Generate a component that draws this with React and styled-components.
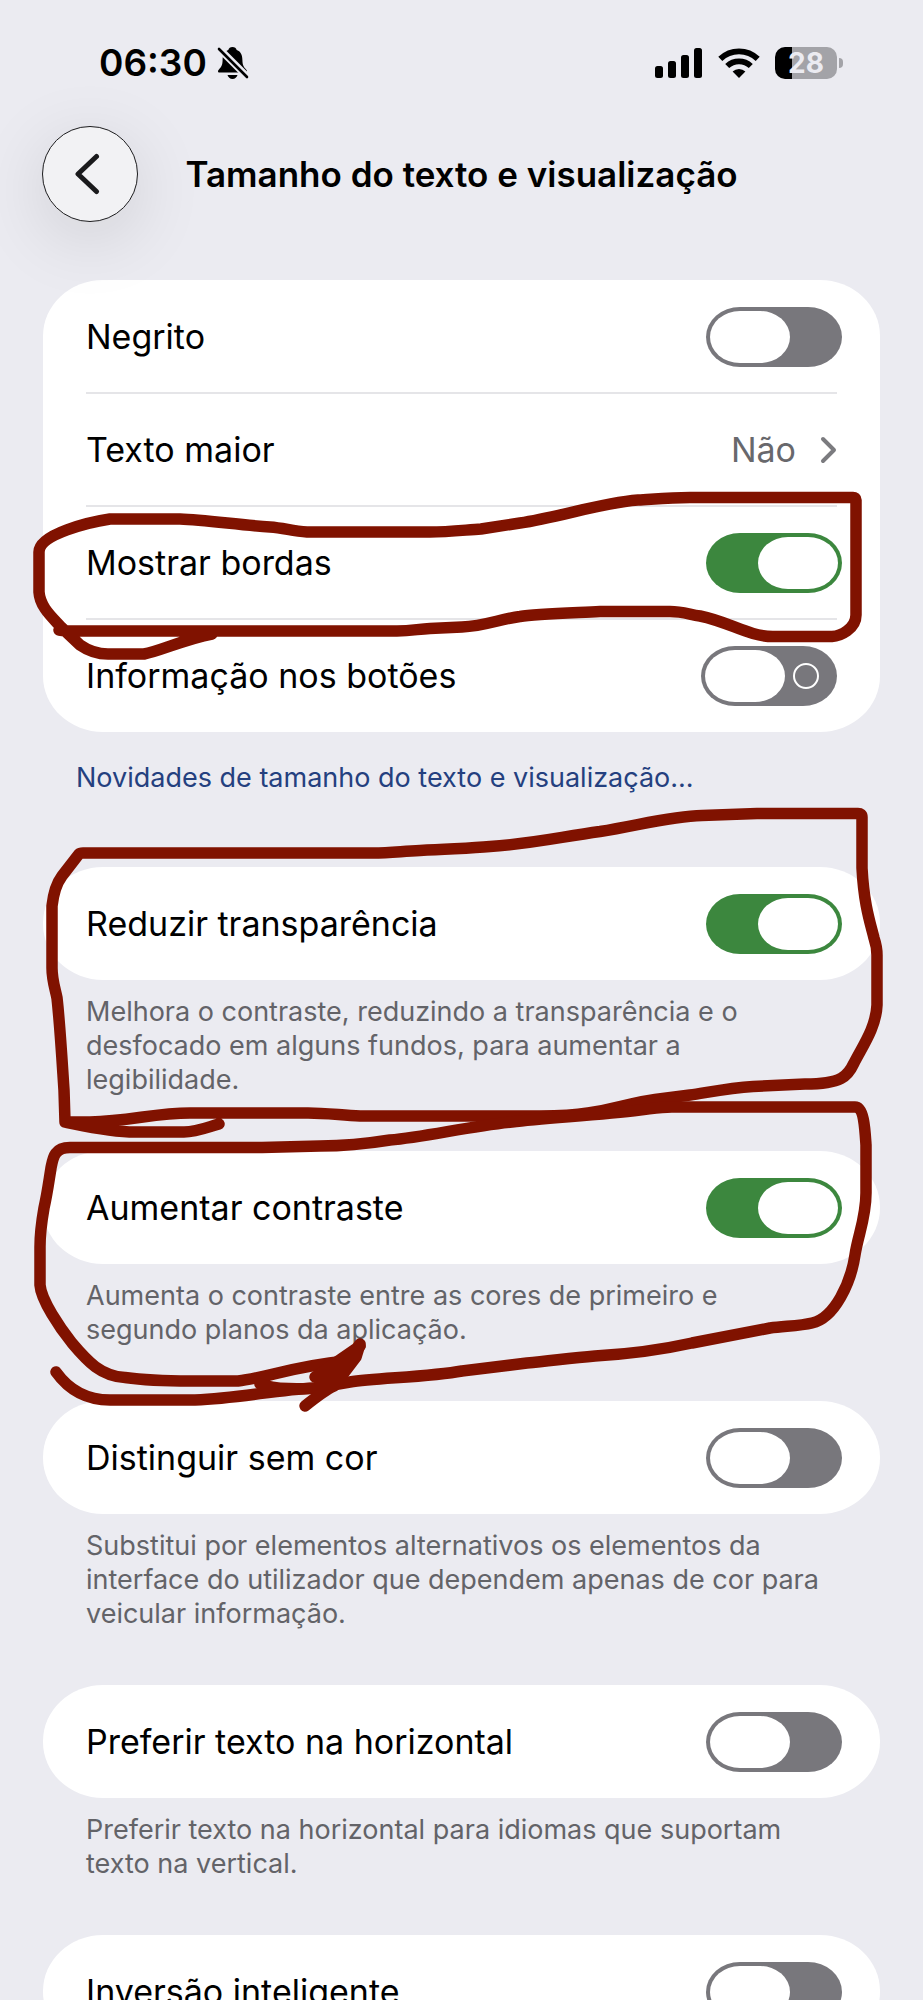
import { useState } from "react";
import styled, { createGlobalStyle } from "styled-components";

const GlobalStyle = createGlobalStyle`
  * {
    box-sizing: border-box;
  }

  body {
    margin: 0;
    background: #ebebf1;
    color: #000;
    font-family: Inter, "Liberation Sans", sans-serif;
  }
`;

const Screen = styled.div`
  position: relative;
  height: 100vh;
  overflow: hidden;
  background: #ebebf1;
`;

const StatusBar = styled.div`
  display: flex;
  align-items: center;
  justify-content: space-between;
  height: 126px;
  padding: 0 80px 0 99px;
`;

const StatusGroup = styled.div`
  display: flex;
  align-items: center;
  gap: ${({ $gap }) => $gap}px;

  svg {
    display: block;
  }
`;

const Time = styled.span`
  font-size: 37px;
  font-weight: 600;
  line-height: 44px;
`;

const Battery = styled.div`
  display: flex;
  align-items: center;
  gap: 2px;

  &::after {
    content: "";
    width: 4px;
    height: 10px;
    border-radius: 0 5px 5px 0;
    background: #a3a3a8;
  }
`;

const BatteryLevel = styled.span`
  width: 62px;
  border-radius: 10px;
  background: linear-gradient(to right, #000 ${({ $level }) => $level}%, #a3a3a8 0);
  color: #ebebf1;
  font-size: 28px;
  font-weight: 700;
  line-height: 32px;
  text-align: center;
`;

const Header = styled.header`
  display: grid;
  grid-template-columns: 96px 1fr 96px;
  align-items: center;
  padding: 0 42px;
  margin-bottom: 58px;
`;

const BackButton = styled.button`
  display: flex;
  align-items: center;
  justify-content: center;
  width: 96px;
  height: 96px;
  padding: 0 6px 0 0;
  border: 1px solid #1c1c1e;
  border-radius: 50%;
  background: #f2f2f4;
  box-shadow: 0 16px 72px rgba(0, 0, 0, 0.12);
`;

const Title = styled.h1`
  margin: 0;
  font-size: 35px;
  font-weight: 600;
  line-height: 44px;
  text-align: center;
  white-space: nowrap;
`;

const Main = styled.main`
  padding: 0 43px;
`;

const Card = styled.div`
  padding: 1px 0;
  border-radius: 60px / 56px;
  background: #fff;
`;

const Row = styled.div`
  display: flex;
  align-items: center;
  justify-content: space-between;
  min-height: 111px;
  padding: 0 ${({ $inset }) => ($inset ? 43 : 38)}px 0 43px;
  font-size: 34px;
  line-height: 44px;
`;

const Divider = styled.hr`
  height: 2px;
  margin: 0 43px;
  border: 0;
  background: #e5e5e8;
`;

const Switch = styled.input`
  appearance: none;
  display: flex;
  align-items: center;
  gap: 8px;
  width: 136px;
  height: 60px;
  margin: 0;
  padding: 4px;
  border-radius: 34px / 30px;
  background: #78777c;

  &::before {
    content: "";
    width: 80px;
    height: 52px;
    border-radius: 30px / 26px;
    background: #fff;
  }

  &:checked {
    justify-content: flex-end;
    background: #3c873e;
  }

  &[data-marked="true"]:not(:checked)::after {
    content: "";
    width: 22px;
    height: 22px;
    border: 2px solid #fff;
    border-radius: 50%;
  }
`;

const ValueButton = styled.button`
  display: flex;
  align-items: center;
  gap: 24px;
  padding: 0;
  border: 0;
  background: none;
  color: #68686c;
  font: inherit;
`;

const Note = styled.p`
  margin: 0;
  padding: 15px 48px 54px 43px;
  color: #636368;
  font-size: 27px;
  line-height: 34px;
`;

const NewsLink = styled.a`
  display: block;
  padding: 29px 33px 72px;
  color: #24407f;
  font-size: 27px;
  line-height: 34px;
  text-decoration: none;
`;

const Markup = styled.svg`
  position: absolute;
  top: 0;
  left: 0;
  width: 100%;
  pointer-events: none;
`;

const BellOff = () => (
  <svg width="32" height="34" viewBox="0 0 32 34" aria-hidden="true">
    <path
      d="M15.500 1c-2.200 0-3.700 1.300-4.200 3C6.800 5.600 5.700 9.500 5.600 14c-.1 5-1.100 6.800-3.500 9.200-1.800 1.900-1.200 3.400.7 3.400h25.400c1.900 0 2.500-1.500.7-3.400-2.400-2.400-3.400-4.200-3.500-9.200-.1-4.500-1.200-8.400-5.700-10-.5-1.700-2-3-4.200-3z"
      fill="#000"
    />
    <path d="M10.500 29h10c-.6 2.300-2.500 4-5 4s-4.400-1.700-5-4z" fill="#000" />
    <path d="M2 2.500 30.500 31" stroke="#ebebf1" strokeWidth="7" />
    <path d="M2 3 30 31" stroke="#000" strokeWidth="2.600" strokeLinecap="round" />
  </svg>
);

const Signal = () => (
  <svg width="48" height="30" viewBox="0 0 48 30" aria-hidden="true">
    <rect x="0" y="18" width="8" height="12" rx="2.500" />
    <rect x="13" y="13" width="8" height="17" rx="2.500" />
    <rect x="26" y="7" width="8" height="23" rx="2.500" />
    <rect x="39" y="0" width="8" height="30" rx="2.500" />
  </svg>
);

const Wifi = () => (
  <svg width="42" height="30" viewBox="0 0 42 30" aria-hidden="true">
    <g fill="none" stroke="#000" strokeWidth="5.800">
      <path d="M2.300 10.800a27 27 0 0 1 37.400 0" />
      <path d="M9.200 18a17.200 17.200 0 0 1 23.600 0" />
    </g>
    <path d="M21 30l-6.400-6.400a9.400 9.400 0 0 1 12.800 0z" />
  </svg>
);

const settings = [
  {
    id: "transparencia",
    label: "Reduzir transparência",
    on: true,
    note: "Melhora o contraste, reduzindo a transparência e o desfocado em alguns fundos, para aumentar a legibilidade.",
  },
  {
    id: "contraste",
    label: "Aumentar contraste",
    on: true,
    note: "Aumenta o contraste entre as cores de primeiro e segundo planos da aplicação.",
  },
  {
    id: "distinguir",
    label: "Distinguir sem cor",
    on: false,
    note: "Substitui por elementos alternativos os elementos da interface do utilizador que dependem apenas de cor para veicular informação.",
  },
  {
    id: "horizontal",
    label: "Preferir texto na horizontal",
    on: false,
    note: "Preferir texto na horizontal para idiomas que suportam texto na vertical.",
  },
  { id: "inversao", label: "Inversão inteligente", on: false },
];

const SwitchRow = ({ id, label, on = false, marked = false }) => {
  const [checked, setChecked] = useState(on);

  return (
    <Row $inset={marked}>
      <label htmlFor={id}>{label}</label>
      <Switch
        id={id}
        type="checkbox"
        role="switch"
        data-marked={marked}
        checked={checked}
        onChange={(e) => setChecked(e.target.checked)}
      />
    </Row>
  );
};

// Hand-drawn pen marks around the three highlighted settings
const PenMarks = () => (
  <Markup viewBox="0 0 923 2000" aria-hidden="true">
    <g
      fill="none"
      stroke="#801200"
      strokeWidth="11.500"
      strokeLinecap="round"
      strokeLinejoin="round"
    >
      <path d="M59 630L66 631H397C412 631 418 629 430 628.500L462 627C485 626 500 619 520 616.500C535 614 570 613 600 611.500H670C682 611.500 688 614 700 616C730 622 748 636.500 773 636.500H832C840 636 856 629 856 615V500Q856 497.500 853 497.500H690C670 497.500 655 499 638 500C600 503 560 517 520 523L481 529C465 530 448 532 430 532H307C292 531 284 528 270 527C240 525 205 520 180 519H110C90 522 39 534 39 552V592C40 607 52 617 61 627L80 645C90 652 98 654 108 654H144C160 651 185 639 212 634" />
      <path d="M65 1122L64 1090C62 1060 60 1025 57 998C55 988 52 980 52 968V906C53 897 56 884 62 876L79 854Q80 853 83 853H373C390 853 400 851.500 420 850.500C450 848.500 470 848.500 490 846.500C530 844 560 837 600 831.500C640 825 672 816 702 815.500L757 813.500H858Q862 813.500 862 817V868C864 905 870 922 874 938C876 944 877 948 877 955V1005C876 1028 862 1047 854 1063C848 1076 842 1084 805 1084L753 1086.500C730 1088 710 1092 690 1095L655 1099.500C635 1102 610 1110 588 1113C570 1116 555 1116 540 1116H360C340 1115 325 1113 308 1113H190C155 1113 130 1121 90 1122H65C85 1126 110 1132 135 1132H184C197 1132 208 1127 219 1124" />
      <path d="M56 1372C66 1386 82 1400 110 1400H195C240 1398 275 1390 315 1388L350 1382C375 1378 430 1377 462 1371L527 1363C550 1361 570 1358 595 1356C630 1354 665 1349 692 1343L770 1328C785 1326 800 1326 812 1323C835 1318 851 1282 855 1255C858 1235 866 1218 866 1193V1145C865 1130 864 1107 855 1107H672C660 1107 650 1109 640 1110C600 1115 545 1118 512 1122C470 1126 425 1137 390 1140C365 1144 345 1146 320 1146L262 1147.500H70C54 1147.500 53 1158 51 1168C48 1187 47 1195 44 1208C41 1225 40 1232 40 1247V1285C41 1300 60 1328 72 1343C88 1362 101 1376 125 1377.500C150 1381 170 1381 190 1381H238C265 1378 295 1366 345 1361L360 1346" />
      <path d="M260 1384C275 1390 300 1389 328 1388L345 1369" />
      <path d="M360 1346L315 1377L345 1364L320 1383L335 1377L360 1344L356 1357L334 1386C325 1390 315 1398 305 1406" />
    </g>
  </Markup>
);

const App = () => {
  return (
    <>
      <GlobalStyle />
      <Screen>
        <StatusBar>
          <StatusGroup $gap={10}>
            <Time>06:30</Time>
            <BellOff />
          </StatusGroup>
          <StatusGroup $gap={15}>
            <Signal />
            <Wifi />
            <Battery>
              <BatteryLevel $level={28}>28</BatteryLevel>
            </Battery>
          </StatusGroup>
        </StatusBar>

        <Header>
          <BackButton type="button" aria-label="Voltar">
            <svg width="26" height="42" viewBox="0 0 26 42" aria-hidden="true">
              <path
                d="M22.500 3.500 4 21l18.500 17.500"
                fill="none"
                stroke="#1a1a1c"
                strokeWidth="5"
                strokeLinecap="round"
                strokeLinejoin="round"
              />
            </svg>
          </BackButton>
          <Title>Tamanho do texto e visualização</Title>
        </Header>

        <Main>
          <Card>
            <SwitchRow id="negrito" label="Negrito" />
            <Divider />
            <Row $inset>
              <span id="texto-maior">Texto maior</span>
              <ValueButton type="button" aria-describedby="texto-maior">
                Não
                <svg width="17" height="28" viewBox="0 0 17 28" aria-hidden="true">
                  <path
                    d="M3 3 14 14 3 25"
                    fill="none"
                    stroke="#7b7b7f"
                    strokeWidth="4"
                    strokeLinecap="round"
                    strokeLinejoin="round"
                  />
                </svg>
              </ValueButton>
            </Row>
            <Divider />
            <SwitchRow id="bordas" label="Mostrar bordas" on />
            <Divider />
            <SwitchRow id="informacao" label="Informação nos botões" marked />
          </Card>
          <NewsLink href="#novidades">
            Novidades de tamanho do texto e visualização...
          </NewsLink>

          {settings.map(({ id, label, on, note }) => (
            <section key={id}>
              <Card>
                <SwitchRow id={id} label={label} on={on} />
              </Card>
              {note && <Note>{note}</Note>}
            </section>
          ))}
        </Main>

        <PenMarks />
      </Screen>
    </>
  );
};

export default App;
